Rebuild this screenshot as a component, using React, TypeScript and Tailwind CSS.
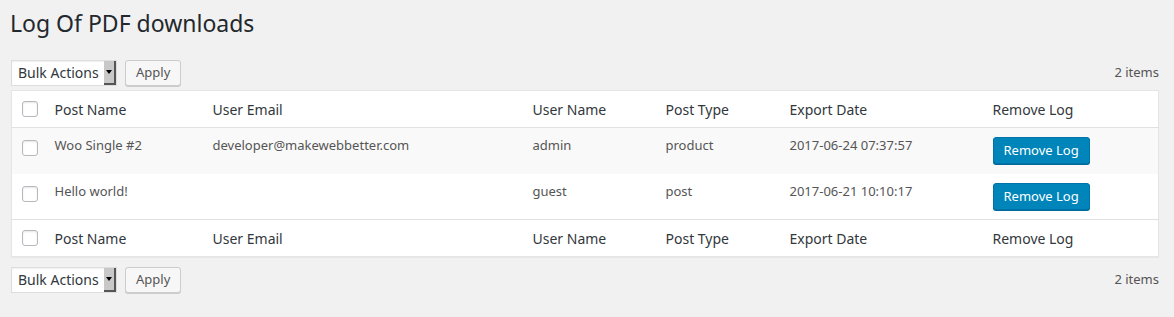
import React from 'react';

type LogRow = {
  id: number;
  postName: string;
  userEmail: string;
  userName: string;
  postType: string;
  exportDate: string;
};

const rows: LogRow[] = [
  { id: 1, postName: 'Woo Single #2', userEmail: 'developer@makewebbetter.com', userName: 'admin', postType: 'product', exportDate: '2017-06-24 07:37:57' },
  { id: 2, postName: 'Hello world!', userEmail: '', userName: 'guest', postType: 'post', exportDate: '2017-06-21 10:10:17' },
];

const Checkbox: React.FC = () => (
  <span className="inline-block w-4 h-4 bg-white border border-[#b4b9be] rounded-[3px] shadow-[inset_0_1px_2px_rgba(0,0,0,0.1)]" />
);

const TableNav: React.FC = () => (
  <div className="flex items-center justify-between h-[26px]">
    <div className="flex items-center gap-2">
      <div className="flex h-[26px] w-[106px] bg-white border border-[#ddd] shadow-[inset_0_1px_2px_rgba(0,0,0,0.07)]">
        <span className="flex-1 pl-[6px] text-[14px] leading-[24px] text-[#32373c]">Bulk Actions</span>
        <span className="w-[12px] bg-[#c8c8c8] border-r-2 border-b-2 border-[#555] flex items-center justify-center">
          <span className="block w-0 h-0 border-l-[3px] border-r-[3px] border-t-[4px] border-l-transparent border-r-transparent border-t-black" />
        </span>
      </div>
      <button className="h-[26px] px-[10px] bg-[#f7f7f7] border border-[#ccc] rounded-[3px] shadow-[0_1px_0_#ccc] text-[13px] text-[#555]">
        Apply
      </button>
    </div>
    <span className="text-[13px] text-[#555]">2 items</span>
  </div>
);

const HeaderRow: React.FC<{ top?: boolean }> = ({ top }) => (
  <tr className={top ? 'border-b border-[#e1e1e1]' : 'border-t border-[#e1e1e1]'}>
    <td className="w-[33px] pl-[10px] h-[37px] align-middle"><div className="flex"><Checkbox /></div></td>
    <th className="w-[158px] pl-[10px] text-left font-normal text-[14px] text-[#32373c]">Post Name</th>
    <th className="w-[320px] pl-[10px] text-left font-normal text-[14px] text-[#32373c]">User Email</th>
    <th className="w-[133px] pl-[10px] text-left font-normal text-[14px] text-[#32373c]">User Name</th>
    <th className="w-[124px] pl-[10px] text-left font-normal text-[14px] text-[#32373c]">Post Type</th>
    <th className="w-[203px] pl-[10px] text-left font-normal text-[14px] text-[#32373c]">Export Date</th>
    <th className="pl-[10px] text-left font-normal text-[14px] text-[#32373c]">Remove Log</th>
  </tr>
);

export default function App() {
  return (
    <div className="min-h-[317px] bg-[#f1f1f1] pl-[11px] pr-[15px] pt-[9px]" style={{ fontFamily: '"Noto Sans", sans-serif' }}>
      <h1 className="text-[23px] text-[#23282d] leading-[29px] -ml-[1px] mb-[22px]">Log Of PDF downloads</h1>
      <TableNav />
      <table className="w-full table-fixed bg-white border border-[#e5e5e5] shadow-[0_1px_1px_rgba(0,0,0,0.04)] mt-[4px] mb-[10px] border-collapse">
        <thead>
          <HeaderRow top />
        </thead>
        <tbody>
          {rows.map((row, i) => (
            <tr key={row.id} className={i % 2 === 0 ? 'bg-[#f9f9f9] h-[46px]' : 'bg-white h-[46px]'}>
              <td className="pl-[10px] align-top pt-[12px]"><div className="flex"><Checkbox /></div></td>
              <td className="pl-[10px] align-top pt-[8px] text-[13px] text-[#555]">{row.postName}</td>
              <td className="pl-[10px] align-top pt-[8px] text-[13px] text-[#555]">{row.userEmail}</td>
              <td className="pl-[10px] align-top pt-[8px] text-[13px] text-[#555]">{row.userName}</td>
              <td className="pl-[10px] align-top pt-[8px] text-[13px] text-[#555]">{row.postType}</td>
              <td className="pl-[10px] align-top pt-[8px] text-[13px] text-[#555]">{row.exportDate}</td>
              <td className="pl-[10px] align-top pt-[9px]">
                <button className="h-[27px] px-[10px] bg-[#0085ba] border border-[#0073aa] rounded-[3px] shadow-[0_1px_0_#006799] text-[13px] text-white">
                  Remove Log
                </button>
              </td>
            </tr>
          ))}
        </tbody>
        <tfoot>
          <HeaderRow />
        </tfoot>
      </table>
      <TableNav />
    </div>
  );
}
